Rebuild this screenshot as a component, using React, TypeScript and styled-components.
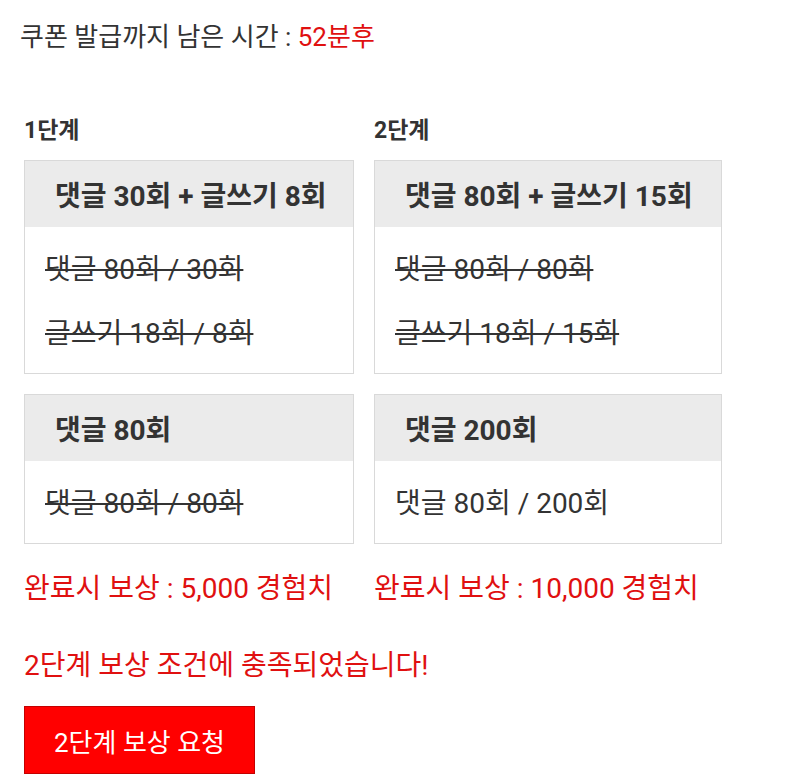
import { createGlobalStyle } from 'styled-components'
import styled from 'styled-components'

const GlobalStyle = createGlobalStyle`
  body {
    margin: 0;
    background: #fff;
    font-family: Roboto, "Noto Sans CJK KR", sans-serif;
    color: #333;
  }
`

const Page = styled.div`
  padding: 18px 0 0 24px;
`

const Timer = styled.div`
  font-size: 26px;
  line-height: 38px;
  margin-left: -4px;
`

const Red = styled.span`
  color: #e01010;
`

const Stages = styled.div`
  display: grid;
  grid-template-columns: 330px 348px;
  column-gap: 20px;
  margin-top: 58px;
`

const Stage = styled.div`
  display: flex;
  flex-direction: column;
  gap: 20px;
`

const StageTitle = styled.h3`
  margin: 0 0 -8px 0;
  font-size: 23px;
  font-weight: 700;
  line-height: 34px;
  color: #333;
`

const Card = styled.div`
  border: 1px solid #d9d9d9;
  background: #fff;
`

const CardHeader = styled.div`
  background: #ebebeb;
  height: 66px;
  display: flex;
  align-items: center;
  padding-left: 30px;
  font-size: 28px;
  font-weight: 700;
  color: #333;
`

const CardBody = styled.div`
  padding: 11px 0 7px 20px;
`

const Line = styled.div<{ $done?: boolean }>`
  font-size: 28px;
  line-height: 64px;
  color: #333;
  text-decoration: ${(p) => (p.$done ? 'line-through' : 'none')};
`

const Reward = styled.div`
  margin-top: 5px;
  font-size: 28px;
  line-height: 40px;
  color: #e01010;
`

const Notice = styled.div`
  margin-top: 37px;
  font-size: 28px;
  line-height: 40px;
  color: #e01010;
`

const RequestButton = styled.button`
  margin-top: 20px;
  width: 231px;
  height: 68px;
  background: #ff0000;
  border: 1px solid #c40000;
  color: #fff;
  font-family: inherit;
  font-size: 26px;
  cursor: pointer;
`

type Mission = { title: string; lines: { text: string; done: boolean }[] }

const stages: { name: string; missions: Mission[]; reward: string }[] = [
  {
    name: '1단계',
    missions: [
      {
        title: '댓글 30회 + 글쓰기 8회',
        lines: [
          { text: '댓글 80회 / 30회', done: true },
          { text: '글쓰기 18회 / 8회', done: true },
        ],
      },
      { title: '댓글 80회', lines: [{ text: '댓글 80회 / 80회', done: true }] },
    ],
    reward: '5,000',
  },
  {
    name: '2단계',
    missions: [
      {
        title: '댓글 80회 + 글쓰기 15회',
        lines: [
          { text: '댓글 80회 / 80회', done: true },
          { text: '글쓰기 18회 / 15회', done: true },
        ],
      },
      { title: '댓글 200회', lines: [{ text: '댓글 80회 / 200회', done: false }] },
    ],
    reward: '10,000',
  },
]

export default function App() {
  return (
    <>
      <GlobalStyle />
      <Page>
        <Timer>
          쿠폰 발급까지 남은 시간 : <Red>52분후</Red>
        </Timer>
        <Stages>
          {stages.map((stage) => (
            <Stage key={stage.name}>
              <StageTitle>{stage.name}</StageTitle>
              {stage.missions.map((m) => (
                <Card key={m.title}>
                  <CardHeader>{m.title}</CardHeader>
                  <CardBody>
                    {m.lines.map((l) => (
                      <Line key={l.text} $done={l.done}>
                        {l.text}
                      </Line>
                    ))}
                  </CardBody>
                </Card>
              ))}
              <Reward>완료시 보상 : {stage.reward} 경험치</Reward>
            </Stage>
          ))}
        </Stages>
        <Notice>2단계 보상 조건에 충족되었습니다!</Notice>
        <RequestButton>2단계 보상 요청</RequestButton>
      </Page>
    </>
  )
}
